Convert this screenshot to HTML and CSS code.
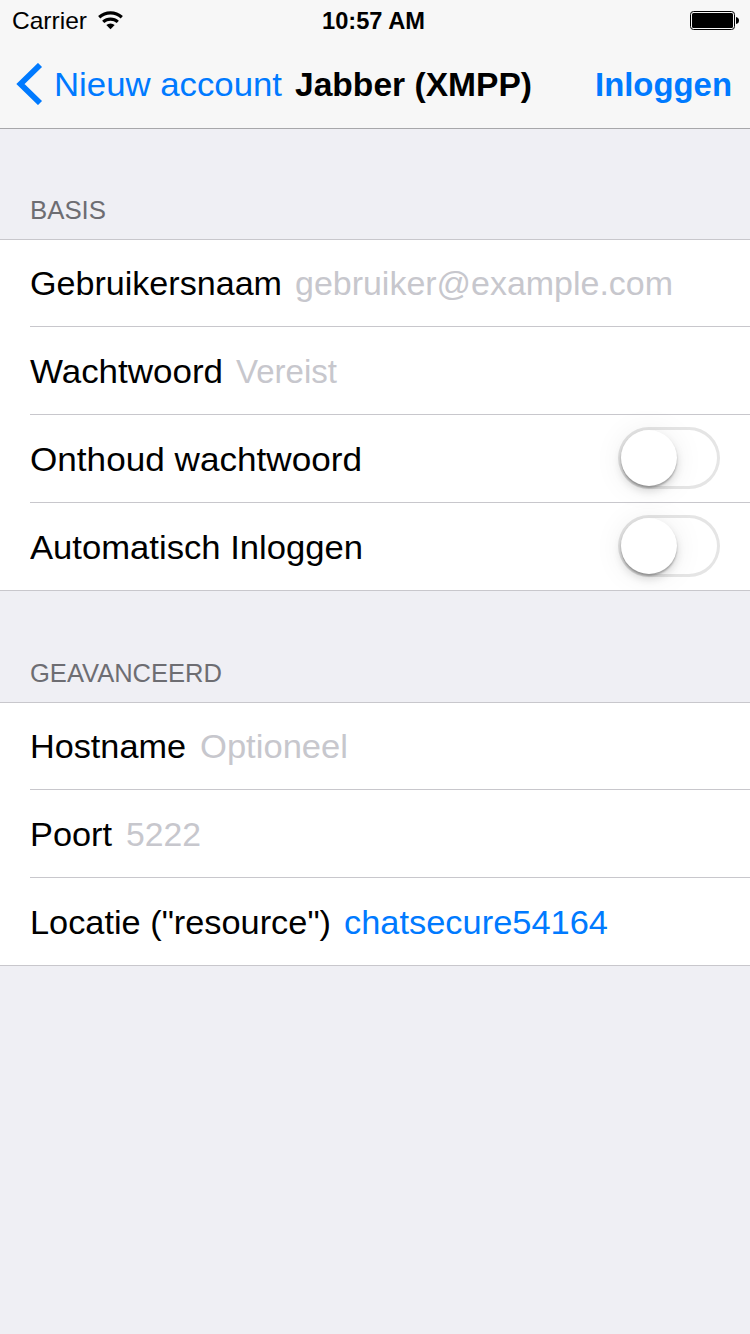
FILE: index.html
```html
<!DOCTYPE html>
<html lang="nl">
<head>
<meta charset="utf-8">
<title>Jabber (XMPP)</title>
<link rel="stylesheet" href="styles.css">
</head>
<body>
<header class="top">
  <div class="status">
    <div class="carrier"><svg class="txt" width="75" height="30"><text x="0" y="22" textLength="75" lengthAdjust="spacingAndGlyphs">Carrier</text></svg>
      <svg class="wifi" width="25" height="19" viewBox="0 0 25 19"><g fill="none" stroke="#000" stroke-width="3.200"><path d="M1.200 6.200a17 17 0 0 1 22.600 0"/><path d="M5.200 10.900a11 11 0 0 1 14.600 0"/></g><path d="M12.500 18.300l-4.200-4.200a6.200 6.200 0 0 1 8.400 0z"/></svg>
    </div>
    <svg class="txt semi clock" width="103" height="30"><text x="0" y="22" textLength="103" lengthAdjust="spacingAndGlyphs">10:57 AM</text></svg>
    <svg class="battery" width="50" height="20" viewBox="0 0 50 20"><rect x=".5" y=".5" width="44" height="18" rx="3" fill="none" stroke="#000"/><rect x="2" y="2" width="41" height="15" rx="1.5"/><path d="M46 6q3 .5 3 3.500t-3 3.500z"/></svg>
  </div>
  <nav class="nav">
    <svg class="back" width="27" height="42" viewBox="0 0 27 42"><path d="M24 2L4.500 21l19.500 19" fill="none" stroke="#007aff" stroke-width="5.800"/></svg>
    <svg class="txt blue back-label" width="230" height="50"><text x="0" y="36" textLength="228" lengthAdjust="spacingAndGlyphs">Nieuw account</text></svg>
    <svg class="txt semi title" width="240" height="50"><text x="0" y="36" textLength="237" lengthAdjust="spacingAndGlyphs">Jabber (XMPP)</text></svg>
    <svg class="txt semi blue login" width="136" height="50"><text x="-1" y="36" textLength="137" lengthAdjust="spacingAndGlyphs">Inloggen</text></svg>
  </nav>
</header>
<main>
  <h2 class="head"><svg class="txt" width="80" height="40"><text x="0" y="30" textLength="76" lengthAdjust="spacingAndGlyphs">BASIS</text></svg></h2>
  <section class="group">
    <div class="row"><svg class="txt" width="252" height="50"><text x="0" y="37" textLength="252" lengthAdjust="spacingAndGlyphs">Gebruikersnaam</text></svg><svg class="txt hint" width="380" height="50"><text x="0" y="37" textLength="378" lengthAdjust="spacingAndGlyphs">gebruiker@example.com</text></svg></div>
    <div class="row"><svg class="txt" width="193" height="50"><text x="0" y="37" textLength="193" lengthAdjust="spacingAndGlyphs">Wachtwoord</text></svg><svg class="txt hint" width="104" height="50"><text x="0" y="37" textLength="101" lengthAdjust="spacingAndGlyphs">Vereist</text></svg></div>
    <div class="row"><svg class="txt" width="333" height="50"><text x="0" y="37" textLength="332" lengthAdjust="spacingAndGlyphs">Onthoud wachtwoord</text></svg><span class="switch"><i class="knob"></i></span></div>
    <div class="row"><svg class="txt" width="334" height="50"><text x="0" y="37" textLength="333" lengthAdjust="spacingAndGlyphs">Automatisch Inloggen</text></svg><span class="switch"><i class="knob"></i></span></div>
  </section>
  <h2 class="head second"><svg class="txt" width="195" height="40"><text x="0" y="30" textLength="192" lengthAdjust="spacingAndGlyphs">GEAVANCEERD</text></svg></h2>
  <section class="group">
    <div class="row"><svg class="txt" width="157" height="50"><text x="0" y="37" textLength="156" lengthAdjust="spacingAndGlyphs">Hostname</text></svg><svg class="txt hint" width="150" height="50"><text x="0" y="37" textLength="148" lengthAdjust="spacingAndGlyphs">Optioneel</text></svg></div>
    <div class="row"><svg class="txt" width="83" height="50"><text x="0" y="37" textLength="82" lengthAdjust="spacingAndGlyphs">Poort</text></svg><svg class="txt hint" width="80" height="50"><text x="0" y="37" textLength="75" lengthAdjust="spacingAndGlyphs">5222</text></svg></div>
    <div class="row"><svg class="txt" width="301" height="50"><text x="0" y="37" textLength="301" lengthAdjust="spacingAndGlyphs">Locatie ("resource")</text></svg><svg class="txt blue" width="266" height="50"><text x="0" y="37" textLength="264" lengthAdjust="spacingAndGlyphs">chatsecure54164</text></svg></div>
  </section>
</main>
</body>
</html>
```
FILE: styles.css
```css
* { box-sizing: border-box; }
body { margin: 0; min-height: 1334px; background: #efeff4; font-family: "Liberation Sans", Arial, sans-serif; }
svg { display: block; flex: none; }
.txt { font-size: 34px; fill: #000; overflow: visible; }
.semi { font-weight: 700; }
.blue { fill: #007aff; }
.hint { fill: #c7c7cd; }
.top { height: 129px; background: #f7f7f7; border-bottom: 1px solid #a7a7aa; }
.status { display: grid; grid-template-columns: 1fr auto 1fr; height: 40px; padding: 7px 11px 0 12px; }
.status .txt { font-size: 24px; }
.carrier { display: flex; gap: 11px; }
.wifi { margin-top: 4px; }
.status .clock { margin-right: 4px; }
.battery { justify-self: end; margin: 4px -1px 0 0; }
.nav { display: flex; height: 88px; padding: 20px 18px 0 16px; }
.back { margin-top: 3px; }
.back-label { margin-left: 11px; }
.title { margin-left: 11px; }
.login { margin-left: auto; }
.head { height: 110px; margin: 0; padding: 60px 0 0 30px; font-weight: 400; }
.head .txt { font-size: 26px; fill: #6d6d72; }
.second { height: 111px; padding-top: 61px; }
.group { background: #fff; border-top: 1px solid #c8c7cc; border-bottom: 1px solid #c8c7cc; }
.row { display: flex; align-items: center; gap: 13px; height: 88px; margin-left: 30px; padding-right: 30px; border-bottom: 1px solid #c8c7cc; }
.row:first-child { height: 87px; }
.row:last-child { height: 87px; border-bottom: 0; overflow: hidden; }
.switch { width: 102px; height: 62px; margin: 0 0 2px auto; padding: 3px; border-radius: 31px; box-shadow: inset 0 0 0 3px #e5e5e5; }
.knob { display: block; width: 56px; height: 56px; border-radius: 50%; background: #fff; box-shadow: 0 2px 2px #0004, 0 5px 9px #0002, 0 2px 30px #00000014; }
```
